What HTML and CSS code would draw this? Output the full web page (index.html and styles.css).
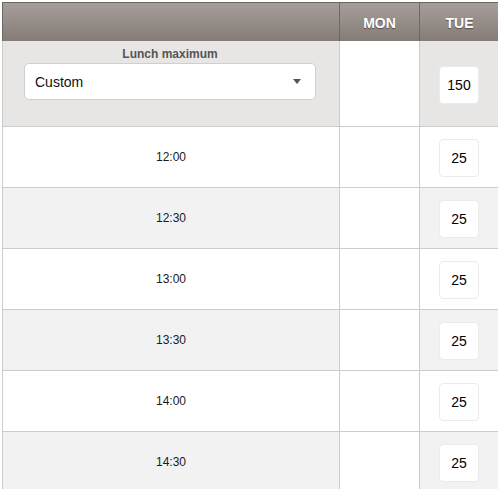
FILE: index.html
```html
<!DOCTYPE html>
<html>
<head>
<meta charset="utf-8">
<link rel="stylesheet" href="styles.css">
</head>
<body>
<div class="grid">
  <div class="row head">
    <div class="c c1"></div>
    <div class="c c2">MON</div>
    <div class="c c3">TUE</div>
  </div>
  <div class="row lunch">
    <div class="c c1">
      <div class="label">Lunch maximum</div>
      <div class="select"><span>Custom</span><span class="caret"></span></div>
    </div>
    <div class="c c2"></div>
    <div class="c c3"><div class="box">150</div></div>
  </div>
  <div class="row">
    <div class="c c1 time">12:00</div><div class="c c2"></div><div class="c c3"><div class="box">25</div></div>
  </div>
  <div class="row alt">
    <div class="c c1 time">12:30</div><div class="c c2"></div><div class="c c3"><div class="box">25</div></div>
  </div>
  <div class="row">
    <div class="c c1 time">13:00</div><div class="c c2"></div><div class="c c3"><div class="box">25</div></div>
  </div>
  <div class="row alt">
    <div class="c c1 time">13:30</div><div class="c c2"></div><div class="c c3"><div class="box">25</div></div>
  </div>
  <div class="row">
    <div class="c c1 time">14:00</div><div class="c c2"></div><div class="c c3"><div class="box">25</div></div>
  </div>
  <div class="row alt">
    <div class="c c1 time">14:30</div><div class="c c2"></div><div class="c c3"><div class="box">25</div></div>
  </div>
</div>
</body>
</html>
```
FILE: styles.css
```css
html, body {
  margin: 0;
  padding: 0;
  background: #fff;
  overflow: hidden;
}
body {
  font-family: "Liberation Sans", Arial, sans-serif;
  color: #111;
}
.grid {
  margin: 2px 0 0 2px;
  width: 496px;
  overflow: hidden;
}
.row {
  display: flex;
  height: 61px;
  box-sizing: border-box;
  border-left: 1px solid #cccccc;
  border-bottom: 1px solid #cccccc;
  background: #fff;
}
.row.alt { background: #f2f2f2; }
.c {
  flex-shrink: 0;
  box-sizing: border-box;
  border-right: 1px solid #cccccc;
  display: flex;
  align-items: center;
  justify-content: center;
}
.c1 { width: 337px; }
.c2 { width: 80px; background: #fff; }
.c3 { width: 80px; }
.head {
  height: 39px;
  border-top: 1px solid #6c6763;
  border-left: 1px solid #6c6763;
  border-bottom: none;
  background: linear-gradient(#a69e9a, #857c77);
}
.head .c {
  border-right: 1px solid #6e6864;
  background: transparent;
  color: #fff;
  font-weight: bold;
  font-size: 14px;
  text-shadow: 0 1px 1px rgba(0,0,0,0.45);
  padding-top: 1px;
}
.lunch {
  height: 86px;
  background: #e8e6e4;
}
.lunch .c1 {
  flex-direction: column;
  justify-content: flex-start;
  padding-top: 6px;
}
.label {
  font-size: 12px;
  font-weight: bold;
  color: #555;
  line-height: 15px;
  margin-left: -2px;
}
.select {
  margin-top: 1px;
  width: 292px;
  height: 37px;
  box-sizing: border-box;
  background: #fff;
  border: 1px solid #d0cfcd;
  border-radius: 5px;
  display: flex;
  align-items: center;
  justify-content: space-between;
  padding: 0 14px 0 10px;
  font-size: 14px;
  color: #111;
  margin-left: -2px;
}
.caret {
  width: 0;
  height: 0;
  border-left: 4px solid transparent;
  border-right: 4px solid transparent;
  border-top: 5px solid #555;
}
.time {
  font-size: 12px;
  color: #1a1a1a;
}
.box {
  width: 40px;
  height: 38px;
  box-sizing: border-box;
  background: #fff;
  border: 1px solid #ebebeb;
  border-radius: 4px;
  display: flex;
  align-items: center;
  justify-content: center;
  font-size: 14px;
  color: #000;
  margin-top: 2px;
  margin-left: -1px;
}
.lunch .box { margin-top: 3px; }
```
